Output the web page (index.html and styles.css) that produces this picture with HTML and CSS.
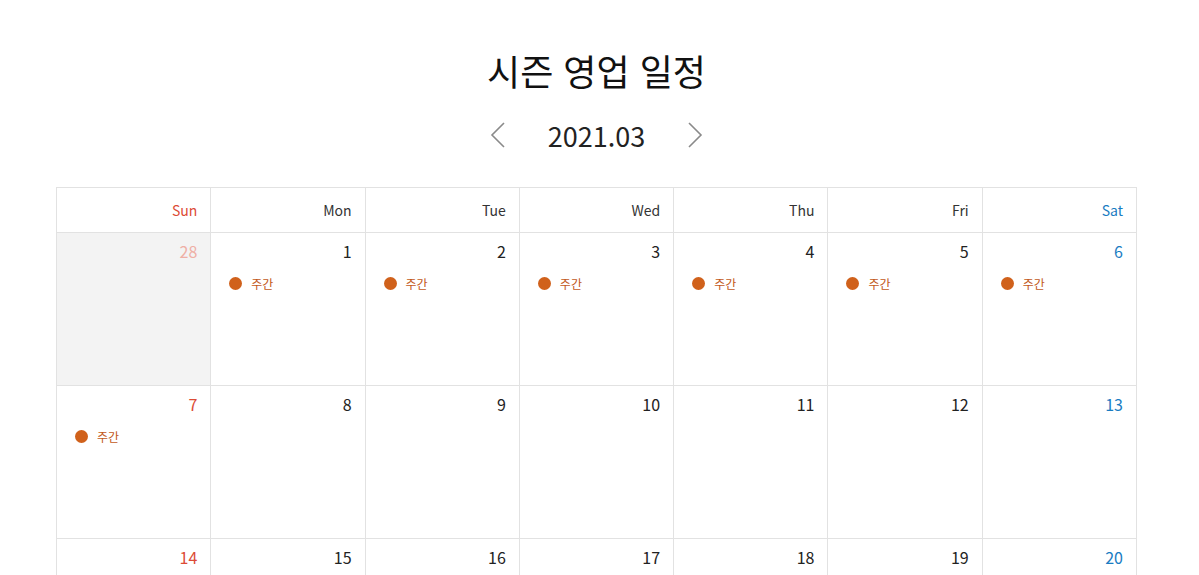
FILE: index.html
```html
<!DOCTYPE html>
<html lang="ko">
<head>
<meta charset="UTF-8">
<title>시즌 영업 일정</title>
<link rel="stylesheet" href="styles.css">
</head>
<body>
<div class="wrap">
    <h1 class="title">시즌 영업 일정</h1>
    <div class="month-nav">
        <button class="nav-btn" aria-label="이전 달">
            <svg width="16" height="26" viewBox="0 0 16 26"><path d="M14 1 L2 13 L14 25" fill="none" stroke="#8a8a8a" stroke-width="1.6"/></svg>
        </button>
        <span class="month">2021.03</span>
        <button class="nav-btn" aria-label="다음 달">
            <svg width="16" height="26" viewBox="0 0 16 26"><path d="M2 1 L14 13 L2 25" fill="none" stroke="#8a8a8a" stroke-width="1.6"/></svg>
        </button>
    </div>
    <table class="calendar">
        <thead>
            <tr>
                <th class="sun">Sun</th><th>Mon</th><th>Tue</th><th>Wed</th><th>Thu</th><th>Fri</th><th class="sat">Sat</th>
            </tr>
        </thead>
        <tbody id="cal-body"></tbody>
    </table>
</div>
<script>
const body = document.getElementById('cal-body');
const events = [1,2,3,4,5,6,7];
const days = [];
days.push({n:28, other:true});
for(let d=1; d<=31; d++) days.push({n:d});
for(let d=1; d<=3; d++) days.push({n:d, other:true});

for(let w=0; w<days.length/7; w++){
    const tr = document.createElement('tr');
    for(let i=0; i<7; i++){
        const day = days[w*7+i];
        const td = document.createElement('td');
        if(i===0) td.classList.add('sun');
        if(i===6) td.classList.add('sat');
        if(day.other) td.classList.add('other');
        let html = '<div class="num">'+day.n+'</div>';
        if(!day.other && events.includes(day.n)){
            html += '<div class="event"><span class="dot"></span>주간</div>';
        }
        td.innerHTML = html;
        tr.appendChild(td);
    }
    body.appendChild(tr);
}
</script>
</body>
</html>
```

FILE: styles.css
```css
* { margin:0; padding:0; box-sizing:border-box; }
body {
    font-family: "Noto Sans CJK KR", "Noto Sans", sans-serif;
    background: #fff;
    color: #222;
    padding-right: 6px;
}
.wrap {
    width: 1081px;
    margin: 0 auto;
}
.title {
    text-align: center;
    font-size: 36px;
    font-weight: 400;
    line-height: 44px;
    padding-top: 48px;
    color: #111;
}
.month-nav {
    display: flex;
    justify-content: center;
    align-items: center;
    gap: 42px;
    margin-top: 23px;
    height: 40px;
}
.nav-btn {
    border: none;
    background: none;
    cursor: pointer;
    display: flex;
    width: 16px;
    height: 26px;
}
.month {
    font-size: 27px;
    font-weight: 400;
    color: #222;
}
.calendar {
    width: 1081px;
    margin-top: 32px;
    border-collapse: collapse;
    table-layout: fixed;
}
.calendar th, .calendar td {
    border: 1px solid #e2e2e2;
}
.calendar th {
    height: 45px;
    text-align: right;
    padding: 0 13px 0 0;
    font-size: 14px;
    font-weight: 400;
    color: #333;
}
.calendar td {
    height: 153px;
    vertical-align: top;
    padding: 7px 13px 0 18px;
}
.calendar th.sun, .calendar td.sun .num { color: #dc4b35; }
.calendar th.sat, .calendar td.sat .num { color: #1a7cc2; }
.calendar td.other { background: #f3f3f3; }
.calendar td.other .num { color: #efafa5; }
.calendar td.other.sat .num { color: #a6c9e4; }
.num {
    text-align: right;
    font-size: 16px;
    line-height: 22px;
    color: #222;
}
.event {
    display: flex;
    align-items: center;
    gap: 9px;
    margin-top: 13px;
    font-size: 12px;
    color: #c2591a;
}
.dot {
    width: 13px;
    height: 13px;
    border-radius: 50%;
    background: #d0611b;
}
```
